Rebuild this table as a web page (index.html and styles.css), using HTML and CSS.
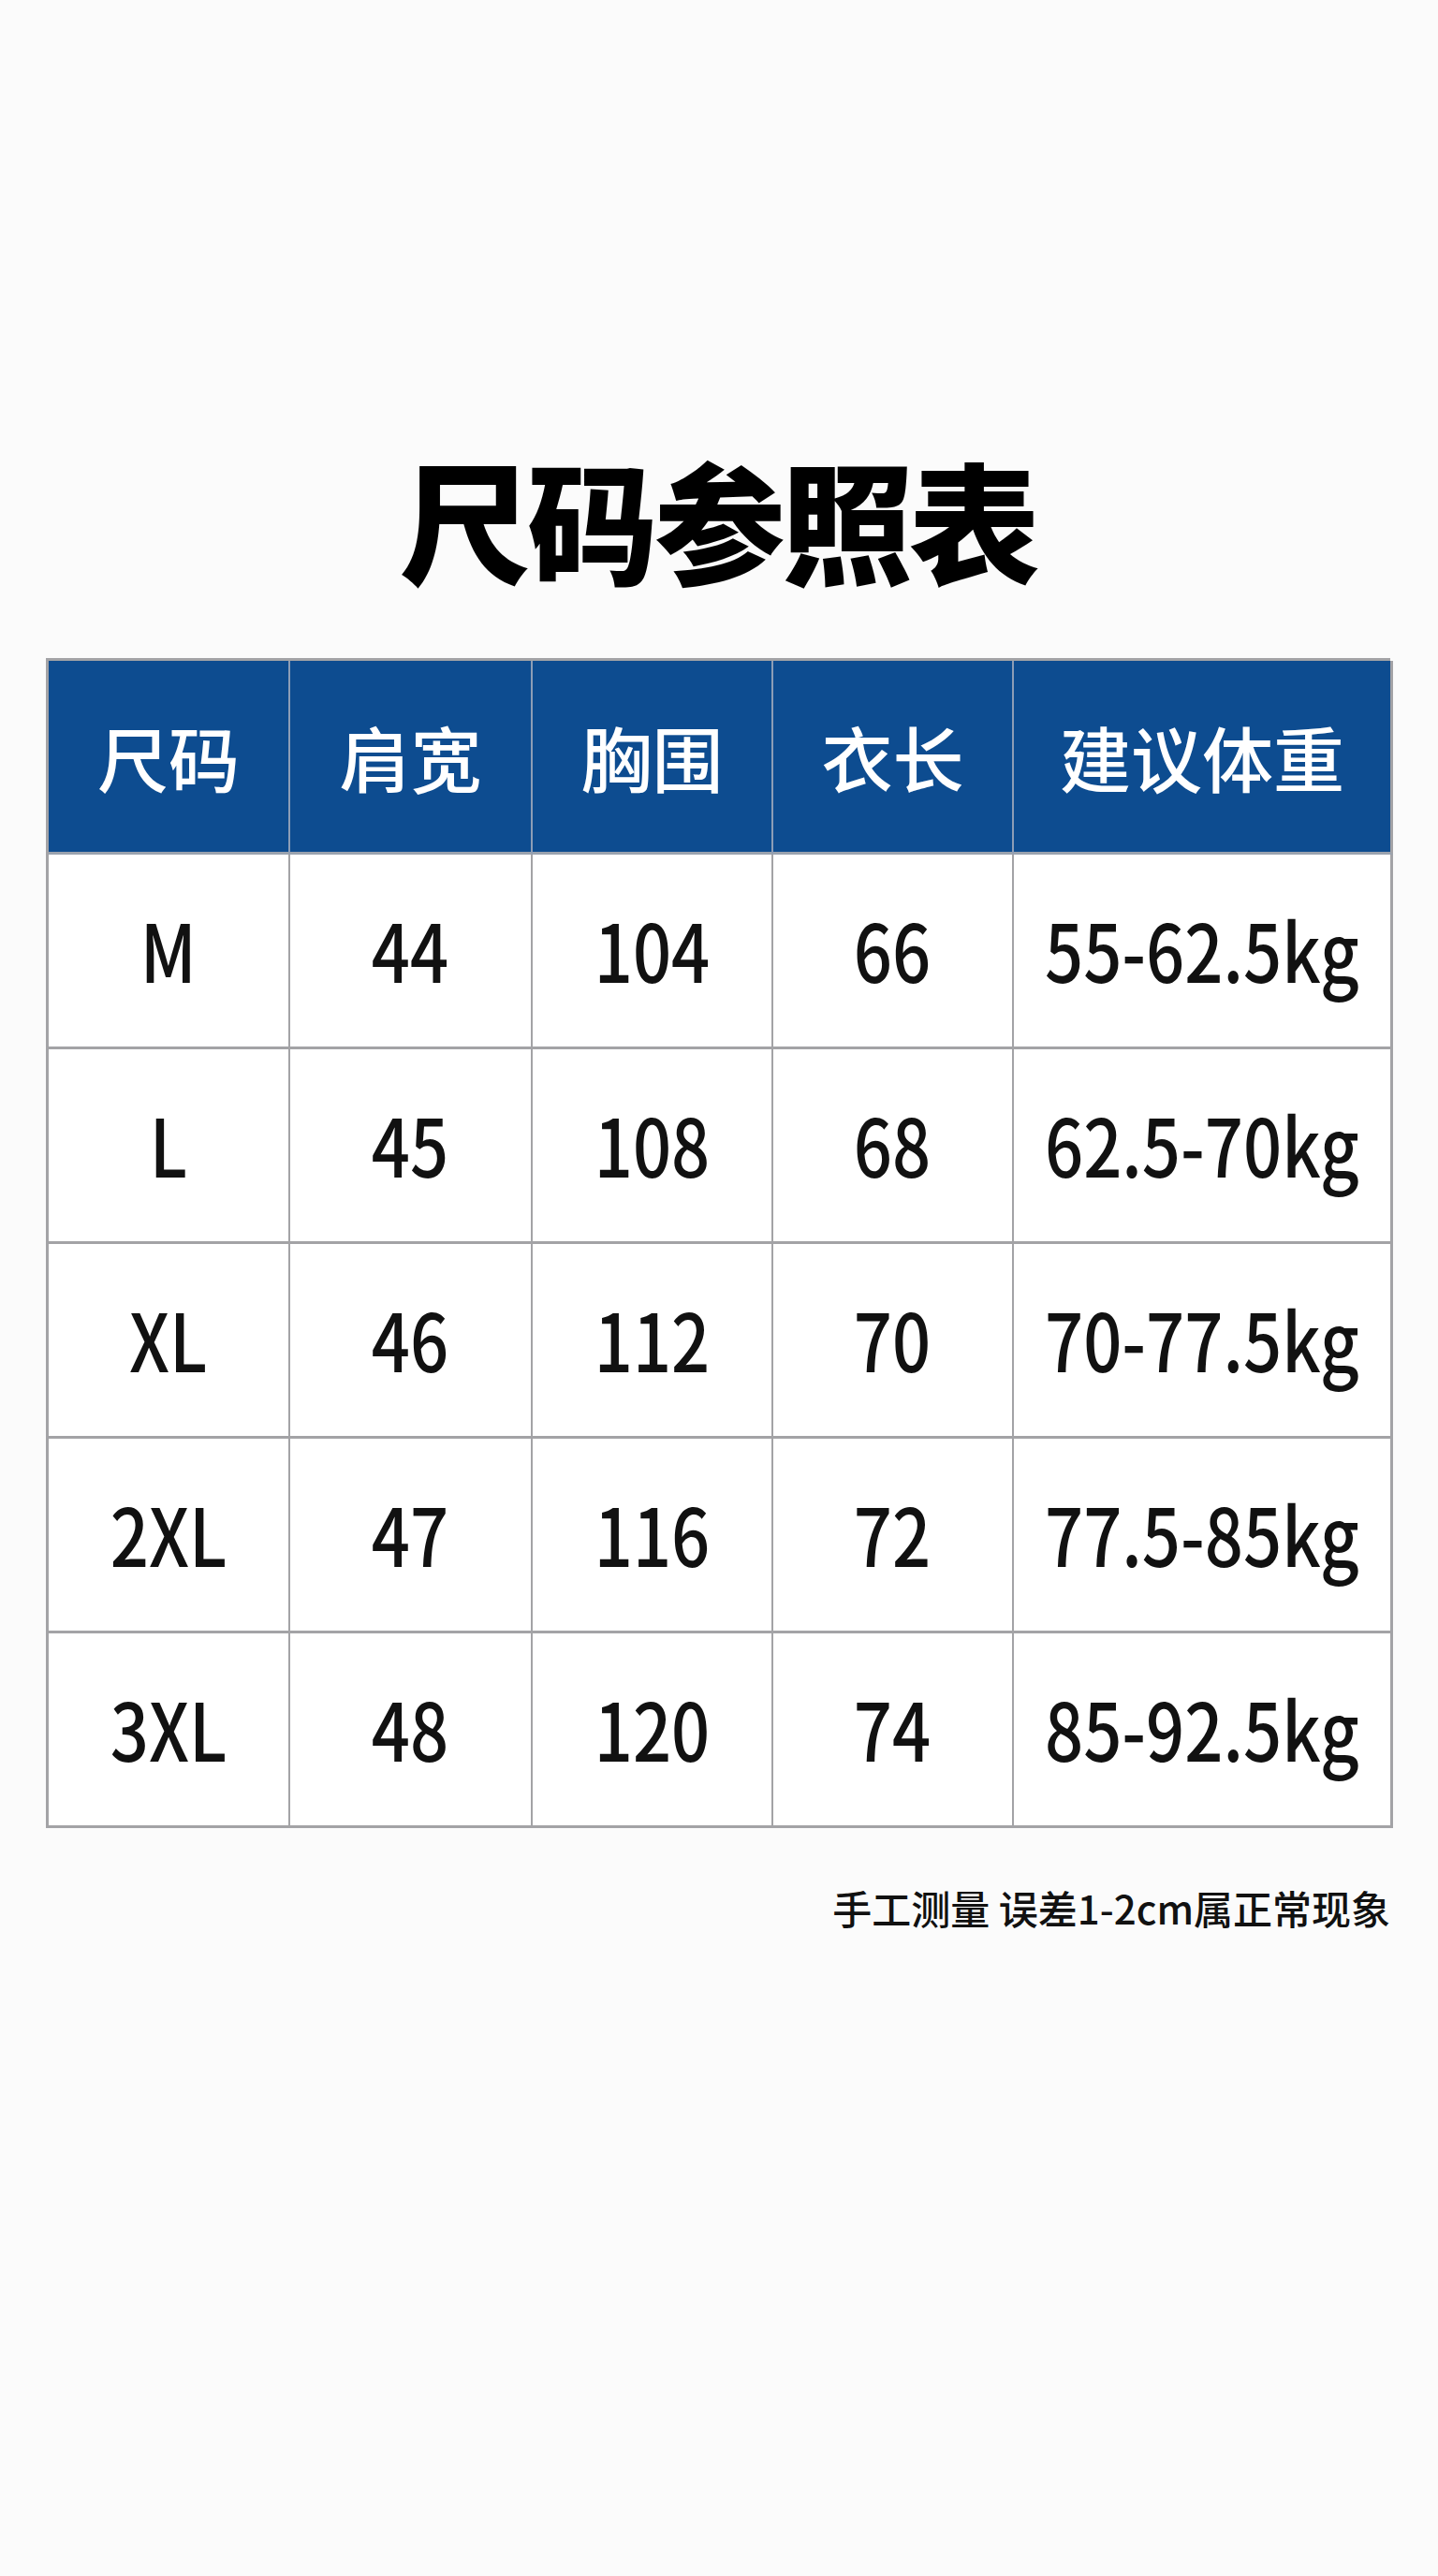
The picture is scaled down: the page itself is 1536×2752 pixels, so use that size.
FILE: index.html
```html
<!DOCTYPE html>
<html lang="zh-CN">
<head>
<meta charset="utf-8">
<title>尺码参照表</title>
<link rel="stylesheet" href="styles.css">
</head>
<body>
<main class="page">
  <h1 class="title">尺码参照表</h1>
  <div class="size-table">
    <div class="cell head"><span>尺码</span></div>
    <div class="cell head"><span>肩宽</span></div>
    <div class="cell head"><span>胸围</span></div>
    <div class="cell head"><span>衣长</span></div>
    <div class="cell head"><span>建议体重</span></div>

    <div class="cell"><span class="num">M</span></div>
    <div class="cell"><span class="num">44</span></div>
    <div class="cell"><span class="num">104</span></div>
    <div class="cell"><span class="num">66</span></div>
    <div class="cell"><span class="num">55-62.5kg</span></div>

    <div class="cell"><span class="num">L</span></div>
    <div class="cell"><span class="num">45</span></div>
    <div class="cell"><span class="num">108</span></div>
    <div class="cell"><span class="num">68</span></div>
    <div class="cell"><span class="num">62.5-70kg</span></div>

    <div class="cell"><span class="num">XL</span></div>
    <div class="cell"><span class="num">46</span></div>
    <div class="cell"><span class="num">112</span></div>
    <div class="cell"><span class="num">70</span></div>
    <div class="cell"><span class="num">70-77.5kg</span></div>

    <div class="cell"><span class="num">2XL</span></div>
    <div class="cell"><span class="num">47</span></div>
    <div class="cell"><span class="num">116</span></div>
    <div class="cell"><span class="num">72</span></div>
    <div class="cell"><span class="num">77.5-85kg</span></div>

    <div class="cell"><span class="num">3XL</span></div>
    <div class="cell"><span class="num">48</span></div>
    <div class="cell"><span class="num">120</span></div>
    <div class="cell"><span class="num">74</span></div>
    <div class="cell"><span class="num">85-92.5kg</span></div>
  </div>
  <p class="note">手工测量 误差1-2cm属正常现象</p>
</main>
</body>
</html>
```
FILE: styles.css
```css
html, body {
  margin: 0;
  padding: 0;
  background: #fbfbfb;
}

body {
  font-family: "Noto Sans CJK SC", "Noto Sans", sans-serif;
  color: #111111;
}

.page {
  width: 1436px;
  margin-left: 49px;
  padding-top: 483px;
  height: 2269px;
}

.title {
  margin: 0 0 80px 0;
  font-size: 140px;
  line-height: 140px;
  height: 140px;
  font-weight: 900;
  text-align: center;
  color: #000000;
  letter-spacing: -4px;
}

.size-table {
  display: grid;
  grid-template-columns: 258px 259px 257px 257px 405px;
  grid-template-rows: 207px repeat(5, 208px);
  border-top: 3px solid #a3a3a6;
  border-left: 3px solid #a3a3a6;
  box-sizing: border-box;
  width: 1436px;
}

.cell {
  display: flex;
  align-items: center;
  justify-content: center;
  border-right: 2px solid #a3a3a6;
  border-bottom: 3px solid #a3a3a6;
  background: #ffffff;
  overflow: hidden;
}

.cell:nth-child(5n) {
  border-right: 3px solid #a3a3a6;
}

.head {
  background: #0d4c90;
  color: #ffffff;
  font-size: 76px;
  font-weight: 500;
  border-right-color: #8c9db6;
  border-bottom-color: #9aa2ae;
}

.head:nth-child(5) {
  border-right-color: #a3a3a6;
}

.head span {
  position: relative;
  top: 0;
}

.num {
  display: inline-block;
  font-size: 86px;
  line-height: 1;
  font-weight: 500;
  color: #111111;
  transform: scaleX(0.84);
  white-space: nowrap;
  position: relative;
  top: -3px;
}

.note {
  margin: 62px 0 0 0;
  font-size: 42px;
  line-height: 46px;
  font-weight: 500;
  text-align: right;
  padding-right: 0;
  color: #111111;
}
```
